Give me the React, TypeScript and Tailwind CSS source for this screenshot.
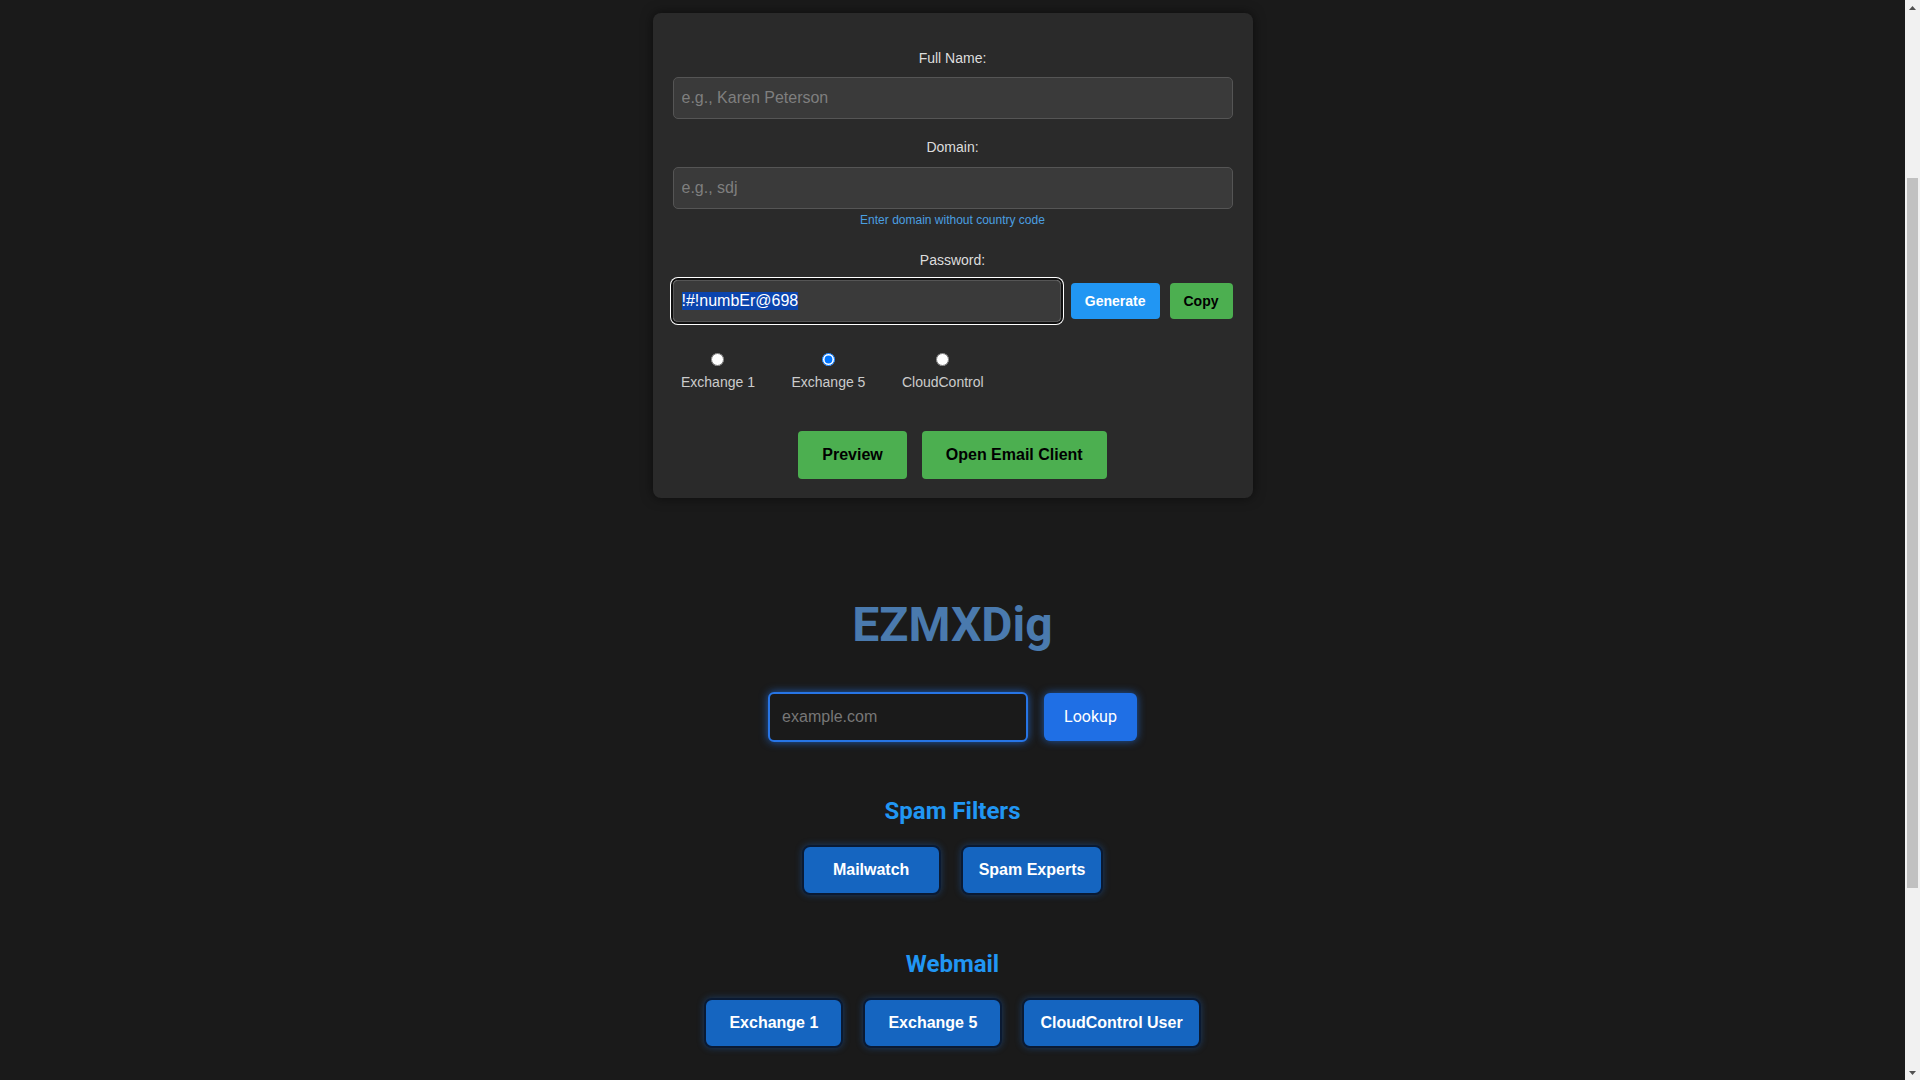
import { useEffect, useRef } from 'react';

const radios = [
  { id: 'ex1', label: 'Exchange 1' },
  { id: 'ex5', label: 'Exchange 5', checked: true },
  { id: 'cc', label: 'CloudControl' },
];

const spamFilters = ['Mailwatch', 'Spam Experts'];
const webmail = ['Exchange 1', 'Exchange 5', 'CloudControl User'];

function LinkButton({ label }: { label: string }) {
  return (
    <button className="min-w-[139px] rounded-lg border-2 border-[#0a1a33] bg-[#1565c0] px-4 py-3.5 text-base font-bold leading-[18px] text-white shadow-[0_0_7px_rgba(30,110,210,0.4)]">
      {label}
    </button>
  );
}

// classic window scrollbar drawn over the right edge
function Scrollbar() {
  return (
    <div className="fixed top-0 right-0 flex h-screen w-[15px] flex-col bg-[#f1f1f1]">
      <div className="flex h-[15px] items-center justify-center">
        <svg width="7" height="4" viewBox="0 0 7 4"><path d="M3.5 0 7 4H0z" fill="#505050" /></svg>
      </div>
      <div className="flex-1 px-[2px]">
        <div className="mt-[163px] h-[710px] bg-[#c1c1c1]" />
      </div>
      <div className="flex h-[15px] items-center justify-center">
        <svg width="7" height="4" viewBox="0 0 7 4"><path d="M0 0h7L3.5 4z" fill="#505050" /></svg>
      </div>
    </div>
  );
}

export default function App() {
  const pwRef = useRef<HTMLInputElement>(null);

  useEffect(() => {
    window.scrollTo(0, 248);
    pwRef.current?.focus({ preventScroll: true });
    pwRef.current?.select();
  }, []);

  return (
    <div className="bg-[#1a1a1a] pt-[261px] pr-[15px] pb-[294px] font-['Liberation_Sans',Arial,sans-serif]">
      {/* Email form card */}
      <div className="mx-auto w-[600px] rounded-lg bg-[#2a2a2a] px-5 pt-[37px] pb-[19px] shadow-[0_0_12px_rgba(0,0,0,0.55)]">
        <div className="mb-5">
          <label className="mb-[11px] block text-center text-sm leading-4 text-[#dddddd]">Full Name:</label>
          <input
            className="h-[42px] w-full rounded-[5px] border border-[#555555] bg-[#3a3a3a] px-2 text-base text-white outline-none placeholder:text-[#7f7f7f]"
            placeholder="e.g., Karen Peterson"
          />
        </div>

        <div className="mb-[25px]">
          <label className="mb-3 block text-center text-sm leading-4 text-[#dddddd]">Domain:</label>
          <input
            className="h-[42px] w-full rounded-[5px] border border-[#555555] bg-[#3a3a3a] px-2 text-base text-white outline-none placeholder:text-[#7f7f7f]"
            placeholder="e.g., sdj"
          />
          <p className="mt-1 text-center text-xs leading-[14px] text-[#4a9fe0]">Enter domain without country code</p>
        </div>

        <div>
          <label className="mb-3 block text-center text-sm leading-4 text-[#dddddd]">Password:</label>
          <div className="flex items-center gap-2.5">
            <input
              ref={pwRef}
              className="h-[42px] min-w-0 flex-1 rounded-[5px] border border-[#555555] bg-[#3a3a3a] px-2 text-base text-white shadow-[0_0_0_3px_white] outline-2 outline-[#101010] selection:bg-[#0b44ad] selection:text-white"
              defaultValue="!#!numbEr@698"
            />
            <button className="rounded bg-[#2196f3] px-3.5 py-2.5 text-sm font-bold leading-4 text-white">Generate</button>
            <button className="rounded bg-[#4caf50] px-3.5 py-2.5 text-sm font-bold leading-4 text-black">Copy</button>
          </div>
        </div>

        <div className="mt-[31px] flex gap-[36.5px] pl-[8.5px]">
          {radios.map(r => (
            <label key={r.id} className="flex flex-col items-center">
              <input type="radio" name="server" defaultChecked={r.checked} className="h-[13px] w-[13px]" />
              <span className="mt-[7.5px] text-sm leading-4 text-[#cccccc]">{r.label}</span>
            </label>
          ))}
        </div>

        <div className="mt-[41px] flex justify-center gap-[15px]">
          <button className="rounded bg-[#4caf50] px-6 py-3.5 text-base font-bold leading-5 text-black">Preview</button>
          <button className="rounded bg-[#4caf50] px-6 py-3.5 text-base font-bold leading-5 text-black">Open Email Client</button>
        </div>
      </div>

      {/* MX lookup */}
      <h1 className="mt-[103px] text-center font-['Roboto',sans-serif] text-5xl leading-[48px] font-bold text-[#4a7aae]">EZMXDig</h1>

      <div className="mt-[43px] flex items-center justify-center gap-4">
        <input
          className="h-[50px] w-[260px] rounded-md border-2 border-[#2775e6] bg-[#1a1a1a] px-3 text-base text-white outline-none shadow-[0_0_8px_rgba(35,115,230,0.75)] placeholder:text-[#777777]"
          placeholder="example.com"
        />
        <button className="h-[48px] rounded-md bg-[#1f6fe5] px-5 font-['Roboto',sans-serif] text-base text-white shadow-[0_0_8px_rgba(35,115,230,0.7)]">
          Lookup
        </button>
      </div>

      <h2 className="mt-[55px] text-center font-['Roboto',sans-serif] text-2xl leading-7 font-bold text-[#2196f3]">Spam Filters</h2>
      <div className="mt-[20px] flex justify-center gap-5">
        {spamFilters.map(s => (
          <LinkButton key={s} label={s} />
        ))}
      </div>

      <h2 className="mt-[55px] text-center font-['Roboto',sans-serif] text-2xl leading-7 font-bold text-[#2196f3]">Webmail</h2>
      <div className="mt-[20px] flex justify-center gap-5">
        {webmail.map(s => (
          <LinkButton key={s} label={s} />
        ))}
      </div>

      <Scrollbar />
    </div>
  );
}
